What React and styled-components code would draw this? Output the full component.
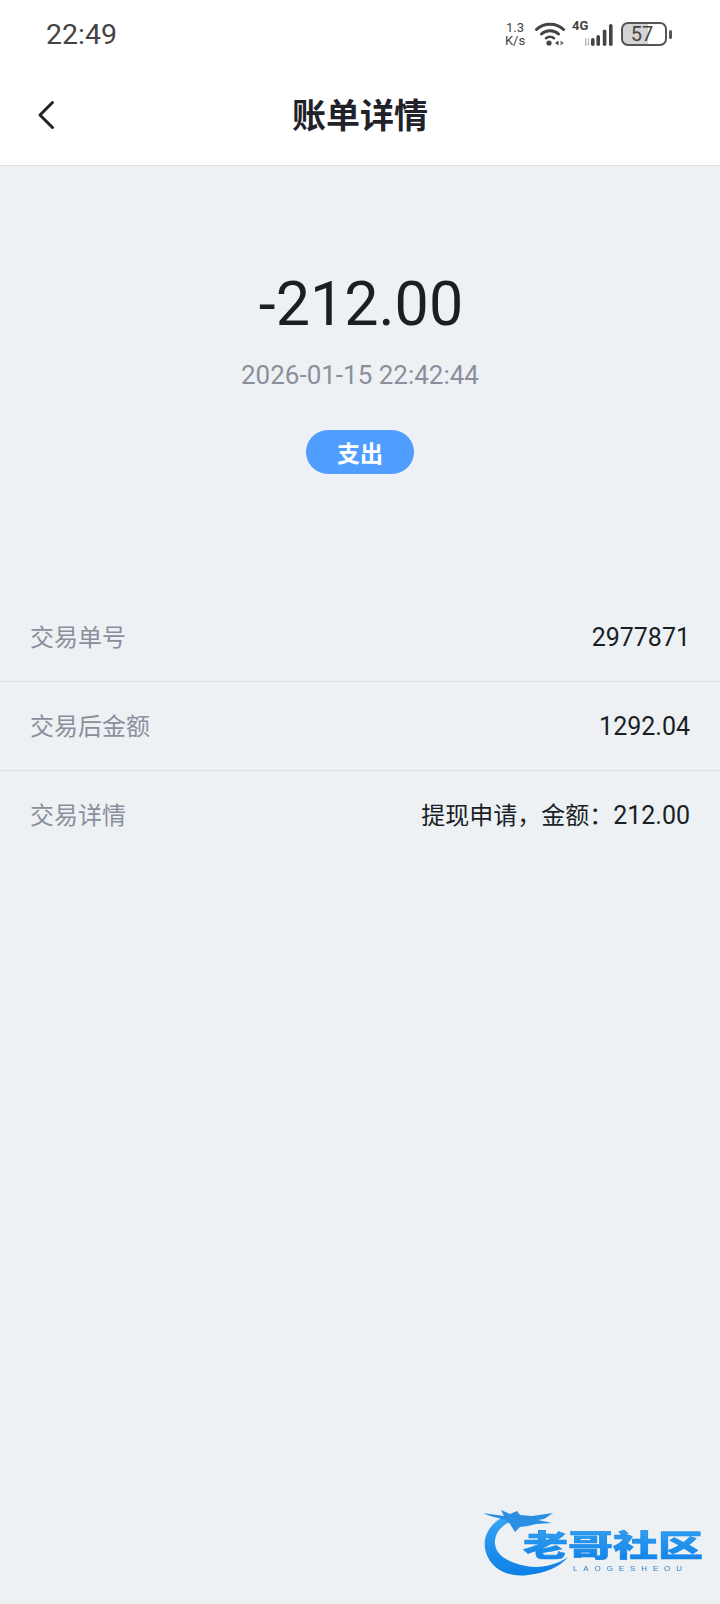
import styled, { createGlobalStyle } from "styled-components"

const sans = `Roboto, "Noto Sans CJK SC", sans-serif`

const GlobalStyle = createGlobalStyle`
    html, body {
        margin: 0;
        padding: 0;
        background: #edf1f4;
    }
    * {
        box-sizing: border-box;
    }
`

const rows = [
    { label: "交易单号", value: "2977871" },
    { label: "交易后金额", value: "1292.04" },
    { label: "交易详情", note: "提现申请，金额：", value: "212.00" },
]

function WifiIcon() {
    return (
        <svg width="30" height="26" viewBox="0 0 30 26" fill="none">
            <path d="M1.5 8.5C8.5 1.5 21.5 1.5 28.5 8.5" stroke="#444" strokeWidth="3" strokeLinecap="round" />
            <path d="M6.5 13C11 8.8 19 8.8 23.5 13" stroke="#444" strokeWidth="3" strokeLinecap="round" />
            <path d="M11 17.2C13.2 15.4 16.8 15.4 19 17.2" stroke="#444" strokeWidth="2.6" strokeLinecap="round" />
            <circle cx="14" cy="22" r="2.6" fill="#444" />
            <path d="M23.5 19.5V24.5L20 22Z" fill="#444" />
            <path d="M25.5 19.5V24.5L29 22Z" fill="#777" />
        </svg>
    )
}

function SignalIcon() {
    return (
        <svg width="29" height="24" viewBox="0 0 29 24" fill="#444">
            <rect x="0" y="15" width="1.5" height="8" fill="#bbb" />
            <path d="M3.5 15V22M3.5 22L2.3 20.5M3.5 22L4.7 20.5" stroke="#bbb" strokeWidth="1" fill="none" />
            <rect x="6" y="15" width="3.6" height="8" rx="1.8" />
            <rect x="11.4" y="12" width="3.6" height="11" rx="1.8" />
            <rect x="17.8" y="6.5" width="3.6" height="16.5" rx="1.8" />
            <rect x="24" y="1" width="3.6" height="22" rx="1.8" />
        </svg>
    )
}

function BackIcon() {
    return (
        <svg width="18" height="30" viewBox="0 0 18 30" fill="none">
            <path d="M15.5 2.5L3 15L15.5 27.5" stroke="#1f2329" strokeWidth="3" strokeLinecap="round" strokeLinejoin="round" />
        </svg>
    )
}

function Logo() {
    return (
        <svg width="260" height="114" viewBox="0 0 260 114">
            <defs>
                <linearGradient id="logoBlue" x1="0" y1="0" x2="0" y2="1">
                    <stop offset="0" stopColor="#3aa6f5" />
                    <stop offset="1" stopColor="#0c7fe6" />
                </linearGradient>
                <filter id="logoSoft">
                    <feGaussianBlur stdDeviation="0.7" />
                </filter>
            </defs>
            <g filter="url(#logoSoft)">
                <path d="M46 25C30 33 23 46 25 58C28 78 48 88 68 85C86 83 100 77 108 67C96 75 80 79 66 76C50 73 36 66 35 54C34 44 41 35 52 31Z" fill="url(#logoBlue)" />
                <path d="M23 23L44 26L41 20L50 24L57 21L60 25L72 26L93 23L84 29L78 30L92 33L76 34L68 36L60 37L55 42L50 34L44 29C36 28 29 26 23 23Z" fill="#2a8fe2" />
                <LogoText x="63" y="66" textLength="180" lengthAdjust="spacingAndGlyphs" fill="url(#logoBlue)" stroke="#1c8ae8" strokeWidth="0.6">
                    老哥社区
                </LogoText>
                <LogoSubText x="113" y="81" textLength="109" lengthAdjust="spacing">
                    LAOGESHEOU
                </LogoSubText>
            </g>
        </svg>
    )
}

export default function App() {
    return (
        <Page>
            <GlobalStyle />
            <Header>
                <StatusBar>
                    <Clock>22:49</Clock>
                    <StatusIcons>
                        <NetSpeed>1.3<br />K/s</NetSpeed>
                        <WifiIcon />
                        <Cell>
                            <CellType>4G</CellType>
                            <SignalIcon />
                        </Cell>
                        <Battery>
                            <BatteryBody>
                                <BatteryLevel>57</BatteryLevel>
                            </BatteryBody>
                            <BatteryTip />
                        </Battery>
                    </StatusIcons>
                </StatusBar>
                <NavBar>
                    <BackBtn><BackIcon /></BackBtn>
                    <Title>账单详情</Title>
                </NavBar>
            </Header>

            <Summary>
                <Amount>-212.00</Amount>
                <DateText>2026-01-15 22:42:44</DateText>
                <TypePill>支出</TypePill>
            </Summary>

            <Details>
                {rows.map((row) => (
                    <Row key={row.label}>
                        <Label>{row.label}</Label>
                        <Value>
                            {row.note && <Note>{row.note}</Note>}
                            {row.value}
                        </Value>
                    </Row>
                ))}
            </Details>

            <Watermark><Logo /></Watermark>
        </Page>
    )
}

const Page = styled.div`
    position: relative;
    width: 720px;
    height: 1604px;
    overflow: hidden;
    background: #edf1f4;
    font-family: ${sans};
`
const Header = styled.header`
    background: #ffffff;
    border-bottom: 1px solid #dcdfe3;
`
const StatusBar = styled.div`
    height: 68px;
    padding: 0 48px 0 46px;
    display: flex;
    align-items: center;
    justify-content: space-between;
`
const Clock = styled.span`
    font-size: 28.5px;
    color: #444444;
`
const StatusIcons = styled.div`
    display: flex;
    align-items: center;
    height: 30px;
`
const NetSpeed = styled.span`
    width: 24px;
    margin-right: 8px;
    font-size: 13px;
    line-height: 13px;
    text-align: center;
    color: #444444;
`
const Cell = styled.div`
    position: relative;
    width: 29px;
    height: 30px;
    margin-left: 7px;
    margin-right: 7px;
    svg {
        position: absolute;
        left: 13px;
        top: 4px;
    }
`
const CellType = styled.span`
    position: absolute;
    left: 0;
    top: -1px;
    font-size: 13px;
    font-weight: 700;
    color: #444444;
`
const Battery = styled.div`
    display: flex;
    align-items: center;
    margin-left: 13px;
`
const BatteryBody = styled.div`
    width: 46px;
    height: 24px;
    padding-right: 4px;
    border: 2px solid #555555;
    border-radius: 7px;
    background: linear-gradient(to right, #d4d4d4 60%, #ffffff 60%);
    display: flex;
    align-items: center;
    justify-content: center;
`
const BatteryLevel = styled.span`
    font-size: 20px;
    color: #444444;
`
const BatteryTip = styled.span`
    width: 3px;
    height: 9px;
    margin-left: 2px;
    border-radius: 2px;
    background: #555555;
`
const NavBar = styled.div`
    position: relative;
    height: 97px;
    padding-bottom: 6px;
    display: flex;
    align-items: center;
    justify-content: center;
`
const BackBtn = styled.div`
    position: absolute;
    left: 37px;
    top: 32px;
    display: flex;
`
const Title = styled.h1`
    margin: 0;
    font-size: 34px;
    font-weight: 700;
    color: #1f2329;
`
const Summary = styled.section`
    padding-top: 103px;
    padding-left: 2px;
    display: flex;
    flex-direction: column;
    align-items: center;
`
const Amount = styled.div`
    font-size: 61px;
    line-height: 70px;
    color: #1a1f26;
`
const DateText = styled.div`
    margin-top: 21px;
    margin-right: 2px;
    font-size: 26px;
    line-height: 30px;
    color: #8b8f9b;
`
const TypePill = styled.div`
    margin-top: 40px;
    margin-right: 2px;
    width: 108px;
    height: 44px;
    border-radius: 22px;
    background: #4f9dff;
    color: #ffffff;
    font-size: 23px;
    font-weight: 700;
    display: flex;
    align-items: center;
    justify-content: center;
`
const Details = styled.section`
    margin-top: 119px;
`
const Row = styled.div`
    height: 89px;
    padding: 1px 30px 0;
    display: flex;
    align-items: center;
    justify-content: space-between;
    border-bottom: 1px solid #dcdfe3;
    &:last-child {
        border-bottom: none;
    }
`
const Label = styled.span`
    font-size: 24px;
    line-height: 30px;
    color: #8b8f9b;
`
const Value = styled.span`
    font-size: 25px;
    line-height: 30px;
    color: #1a1f26;
`
const Note = styled.span`
    font-size: 24px;
`
const Watermark = styled.div`
    position: absolute;
    left: 460px;
    top: 1490px;
    display: flex;
`
const LogoText = styled.text`
    font-family: "Noto Sans CJK SC", sans-serif;
    font-weight: 900;
    font-size: 30px;
`
const LogoSubText = styled.text`
    font-family: "Liberation Sans", sans-serif;
    font-size: 8px;
    fill: #2f7fc9;
`
